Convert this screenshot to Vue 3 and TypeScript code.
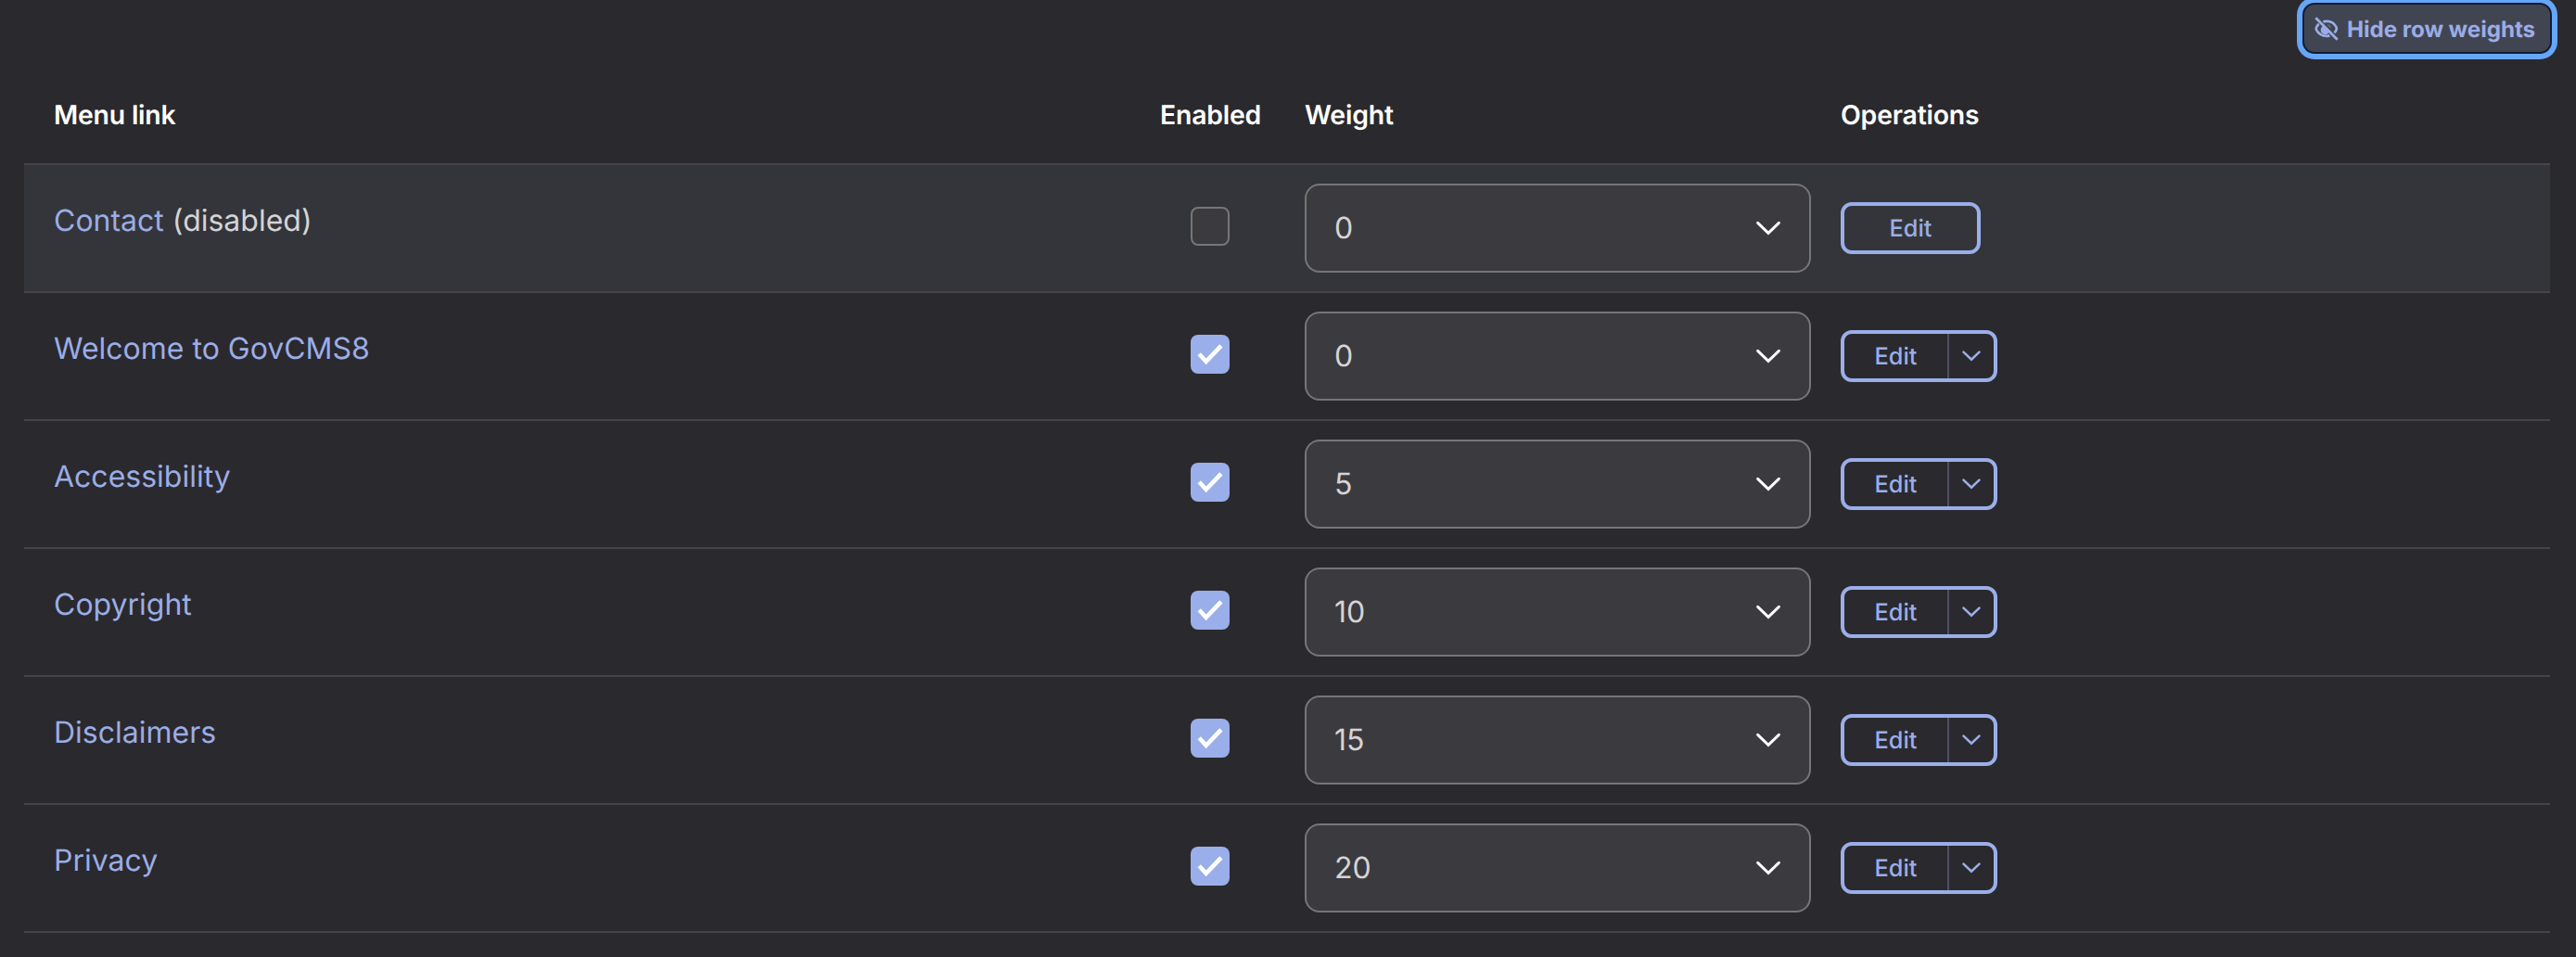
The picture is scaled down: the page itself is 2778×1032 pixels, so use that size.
<script setup lang="ts">
interface MenuRow {
  title: string
  enabled: boolean
  weight: number
}

const rows: MenuRow[] = [
  { title: 'Contact', enabled: false, weight: 0 },
  { title: 'Welcome to GovCMS8', enabled: true, weight: 0 },
  { title: 'Accessibility', enabled: true, weight: 5 },
  { title: 'Copyright', enabled: true, weight: 10 },
  { title: 'Disclaimers', enabled: true, weight: 15 },
  { title: 'Privacy', enabled: true, weight: 20 },
]
</script>

<template>
  <main class="page">
    <div class="toolbar">
      <button type="button" class="toggle">
        <svg class="eye" width="26" height="26" viewBox="0 0 26 26" fill="none" stroke="currentColor">
          <path d="M9.400 5.500C10.600 5 11.800 4.800 13 4.800C17.500 4.800 21.400 7 23.400 11C24 12.200 24 13.500 23.400 14.700C22.900 15.700 22.200 16.600 21.400 17.400" stroke-width="2.700" />
          <path d="M4.800 7.900C3.700 8.800 2.900 9.800 2.300 11C1.700 12.200 1.700 13.500 2.300 14.700C4.500 18.800 8.500 20.900 13 20.900C14.200 20.900 15.300 20.750 16.400 20.400" stroke-width="2.700" />
          <path d="M9.300 10A4.900 4.900 0 1 0 15.900 16.600Z" fill="currentColor" stroke="none" />
          <path d="M14 8.600A4.400 4.400 0 0 1 17.300 11.900" stroke-width="1.400" opacity="0.4" />
          <path d="M1.300 1.300L24.700 24.700" stroke-width="2.800" />
        </svg>
        <span>Hide row weights</span>
      </button>
    </div>

    <section class="table">
      <div class="row head">
        <div>Menu link</div>
        <div class="enabled">Enabled</div>
        <div>Weight</div>
        <div>Operations</div>
      </div>

      <div v-for="row in rows" :key="row.title" class="row item" :class="{ disabled: !row.enabled }">
        <div class="title">
          <a>{{ row.title }}</a><template v-if="!row.enabled"> (disabled)</template>
        </div>
        <div class="enabled">
          <span class="checkbox" :class="{ checked: row.enabled }">
            <svg v-if="row.enabled" width="42" height="42" viewBox="0 0 42 42" fill="none">
              <path d="M9.200 20.800L16.700 28.900L32.900 11.900" stroke="#fff" stroke-width="4.600" />
            </svg>
          </span>
        </div>
        <div>
          <div class="select">
            <span>{{ row.weight }}</span>
            <svg width="28" height="18" viewBox="0 0 28 18" fill="none">
              <path d="M2.600 3.400L14 14.300L25.400 3.400" stroke="#fff" stroke-width="3" stroke-linecap="round" />
            </svg>
          </div>
        </div>
        <div>
          <div class="ops" :class="{ split: row.enabled }">
            <span class="edit">Edit</span>
            <span v-if="row.enabled" class="more">
              <svg width="22" height="14" viewBox="0 0 22 14" fill="none">
                <path d="M2.500 2.600L11 10.800L19.500 2.600" stroke="currentColor" stroke-width="2.600" stroke-linecap="round" />
              </svg>
            </span>
          </div>
        </div>
      </div>
    </section>
  </main>
</template>

<style>
body {
  background: #2a292d;
}
</style>

<style scoped>
.page {
  box-sizing: border-box;
  height: 1032px;
  overflow: hidden;
  padding: 5px 28px 0 26px;
  background: #2a292d;
  color: #d4d4d5;
  font-family: Inter, "Liberation Sans", sans-serif;
  font-size: 32px;
  line-height: 40px;
  text-rendering: geometricPrecision;
}

.toolbar {
  display: flex;
  justify-content: flex-end;
  height: 65px;
}

.toggle {
  display: flex;
  align-items: center;
  box-sizing: border-box;
  width: 265px;
  height: 51px;
  padding: 0 0 0 11px;
  border: 0;
  border-radius: 11px;
  background: #414552;
  box-shadow: 0 0 0 2px #0f1c33, 0 0 0 8px #66a5f8;
  color: #9bade6;
  font: 700 24.2px/36px Inter, "Liberation Sans", sans-serif;
  letter-spacing: -0.05px;
  text-rendering: geometricPrecision;
  white-space: nowrap;
}

.toggle span {
  padding-top: 2px;
}

.eye {
  flex: none;
  margin-right: 9px;
}

.row {
  display: grid;
  grid-template-columns: 1193px 156px 578px 1fr;
  align-items: center;
  box-sizing: border-box;
  padding-left: 32px;
  border-bottom: 2px solid #454549;
}

.head {
  height: 108px;
  padding-top: 2px;
  color: #fff;
  font-size: 28.4px;
  font-weight: 600;
  letter-spacing: -0.2px;
}

.item {
  height: 138px;
}

.item.disabled {
  background: #34353a;
}

.enabled {
  width: 108px;
  text-align: center;
}

.item .enabled {
  display: flex;
  justify-content: center;
  padding-bottom: 4px;
}

.title {
  padding-bottom: 16px;
}

.title a {
  color: #9bade6;
}

.checkbox {
  box-sizing: border-box;
  width: 42px;
  height: 42px;
  border: 2px solid #76767a;
  border-radius: 8px;
  background: #3b3a3e;
}

.checkbox.checked {
  border: 0;
  background: #9aaee9;
}

.checkbox svg {
  display: block;
}

.select {
  display: flex;
  align-items: center;
  justify-content: space-between;
  box-sizing: border-box;
  width: 546px;
  height: 96px;
  padding: 0 30px;
  border: 2px solid #76767a;
  border-radius: 16px;
  background: #3b3a3e;
}

.ops {
  display: flex;
  box-sizing: border-box;
  width: 151px;
  height: 56px;
  border: 4px solid #9aaee9;
  border-radius: 12px;
  color: #9bade6;
  font-size: 25.3px;
  font-weight: 500;
  line-height: 50px;
}

.ops.split {
  width: 169px;
}

.edit {
  flex: 1;
  height: 48px;
  text-align: center;
}

.more {
  display: flex;
  align-items: center;
  justify-content: center;
  width: 48px;
  border-left: 2px solid #4c5164;
}
</style>
